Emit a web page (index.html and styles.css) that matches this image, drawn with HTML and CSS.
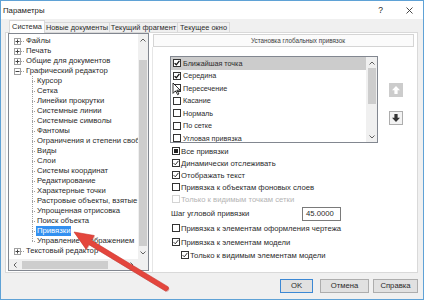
FILE: index.html
```html
<!DOCTYPE html>
<html lang="ru">
<head>
<meta charset="utf-8">
<title>Параметры</title>
<link rel="stylesheet" href="styles.css">
</head>
<body>
<div class="window">
  <div class="titlebar">
    <span class="title">Параметры</span>
    <span class="help">?</span>
    <svg class="close" viewBox="0 0 7 7" width="7" height="7"><path d="M0.5 0.5L6.5 6.5M6.5 0.5L0.5 6.5" stroke="#333" stroke-width="0.9"/></svg>
  </div>
  <div class="body">
    <div class="tabs">
      <div class="tab active t1">Система</div>
      <div class="tab t2">Новые документы</div>
      <div class="tab t3">Текущий фрагмент</div>
      <div class="tab t4">Текущее окно</div>
    </div>
    <div class="tabpage">
      <div class="tree">
        <div class="tree-content">
          <div class="row root"><svg class="exp" viewBox="0 0 7 7"><rect x="0.5" y="0.5" width="6" height="6" fill="#fff" stroke="#a0a0a0"/><path d="M1.5 3.5h4M3.5 1.5v4" stroke="#444"/></svg><span class="hline"></span><span class="label">Файлы</span></div>
          <div class="row root"><svg class="exp" viewBox="0 0 7 7"><rect x="0.5" y="0.5" width="6" height="6" fill="#fff" stroke="#a0a0a0"/><path d="M1.5 3.5h4M3.5 1.5v4" stroke="#444"/></svg><span class="hline"></span><span class="label">Печать</span></div>
          <div class="row root"><svg class="exp" viewBox="0 0 7 7"><rect x="0.5" y="0.5" width="6" height="6" fill="#fff" stroke="#a0a0a0"/><path d="M1.5 3.5h4M3.5 1.5v4" stroke="#444"/></svg><span class="hline"></span><span class="label">Общие для документов</span></div>
          <div class="row root"><svg class="exp" viewBox="0 0 7 7"><rect x="0.5" y="0.5" width="6" height="6" fill="#fff" stroke="#a0a0a0"/><path d="M1.5 3.5h4" stroke="#444"/></svg><span class="hline"></span><span class="label">Графический редактор</span></div>
          <div class="row child"><span class="branch"></span><span class="label">Курсор</span></div>
          <div class="row child"><span class="branch"></span><span class="label">Сетка</span></div>
          <div class="row child"><span class="branch"></span><span class="label">Линейки прокрутки</span></div>
          <div class="row child"><span class="branch"></span><span class="label">Системные линии</span></div>
          <div class="row child"><span class="branch"></span><span class="label">Системные символы</span></div>
          <div class="row child"><span class="branch"></span><span class="label">Фантомы</span></div>
          <div class="row child"><span class="branch"></span><span class="label">Ограничения и степени свободы</span></div>
          <div class="row child"><span class="branch"></span><span class="label">Виды</span></div>
          <div class="row child"><span class="branch"></span><span class="label">Слои</span></div>
          <div class="row child"><span class="branch"></span><span class="label">Системы координат</span></div>
          <div class="row child"><span class="branch"></span><span class="label">Редактирование</span></div>
          <div class="row child"><span class="branch"></span><span class="label">Характерные точки</span></div>
          <div class="row child"><span class="branch"></span><span class="label">Растровые объекты, взятые в ,</span></div>
          <div class="row child"><span class="branch"></span><span class="label">Упрощенная отрисовка</span></div>
          <div class="row child"><span class="branch"></span><span class="label">Поиск объекта</span></div>
          <div class="row child"><span class="branch"></span><span class="label sel">Привязки</span></div>
          <div class="row child"><span class="branch last"></span><span class="label">Управление изображением</span></div>
          <div class="row root"><svg class="exp" viewBox="0 0 7 7"><rect x="0.5" y="0.5" width="6" height="6" fill="#fff" stroke="#a0a0a0"/><path d="M1.5 3.5h4M3.5 1.5v4" stroke="#444"/></svg><span class="hline"></span><span class="label">Текстовый редактор</span></div>
        </div>
        <div class="vscroll">
          <div class="sb-arrow"><svg viewBox="0 0 6 4" width="6" height="4"><path d="M0.5 3.5L3 1L5.5 3.5" fill="none" stroke="#606060"/></svg></div>
          <div class="vtrack"><div class="vthumb tree-thumb"></div></div>
          <div class="sb-arrow"><svg viewBox="0 0 6 4" width="6" height="4"><path d="M0.5 0.5L3 3L5.5 0.5" fill="none" stroke="#606060"/></svg></div>
        </div>
        <div class="hscroll">
          <div class="sb-arrow h"><svg viewBox="0 0 4 6" width="4" height="6"><path d="M3.5 0.5L1 3L3.5 5.5" fill="none" stroke="#606060"/></svg></div>
          <div class="htrack"><div class="hthumb"></div></div>
          <div class="sb-arrow h"><svg viewBox="0 0 4 6" width="4" height="6"><path d="M0.5 0.5L3 3L0.5 5.5" fill="none" stroke="#606060"/></svg></div>
        </div>
        <div class="corner"></div>
      </div>
      <div class="panel">
        <div class="panel-header">Установка глобальных привязок</div>
        <div class="settings">
          <div class="listrow">
            <div class="listbox">
              <div class="list-items">
                <div class="item sel"><svg class="cb" viewBox="0 0 8 8"><rect x="0.5" y="0.5" width="7" height="7" fill="#fff" stroke="#333"/><path d="M1.6 4.1L3.3 5.8L6.4 1.9" fill="none" stroke="#111" stroke-width="1.3"/></svg><span>Ближайшая точка</span></div>
                <div class="item"><svg class="cb" viewBox="0 0 8 8"><rect x="0.5" y="0.5" width="7" height="7" fill="#fff" stroke="#333"/><path d="M1.6 4.1L3.3 5.8L6.4 1.9" fill="none" stroke="#111" stroke-width="1.3"/></svg><span>Середина</span></div>
                <div class="item"><svg class="cb" viewBox="0 0 8 8"><rect x="0.5" y="0.5" width="7" height="7" fill="#fff" stroke="#333"/></svg><span>Пересечение</span></div>
                <div class="item"><svg class="cb" viewBox="0 0 8 8"><rect x="0.5" y="0.5" width="7" height="7" fill="#fff" stroke="#333"/></svg><span>Касание</span></div>
                <div class="item"><svg class="cb" viewBox="0 0 8 8"><rect x="0.5" y="0.5" width="7" height="7" fill="#fff" stroke="#333"/></svg><span>Нормаль</span></div>
                <div class="item"><svg class="cb" viewBox="0 0 8 8"><rect x="0.5" y="0.5" width="7" height="7" fill="#fff" stroke="#333"/></svg><span>По сетке</span></div>
                <div class="item"><svg class="cb" viewBox="0 0 8 8"><rect x="0.5" y="0.5" width="7" height="7" fill="#fff" stroke="#333"/></svg><span>Угловая привязка</span></div>
              </div>
              <div class="vscroll list-sb">
                <div class="sb-arrow"><svg viewBox="0 0 6 4" width="6" height="4"><path d="M0.5 3.5L3 1L5.5 3.5" fill="none" stroke="#606060"/></svg></div>
                <div class="vtrack"><div class="vthumb list-thumb"></div></div>
                <div class="sb-arrow"><svg viewBox="0 0 6 4" width="6" height="4"><path d="M0.5 0.5L3 3L5.5 0.5" fill="none" stroke="#606060"/></svg></div>
              </div>
            </div>
            <div class="order">
              <div class="obtn disabled"><svg viewBox="0 0 12 12" width="12" height="12"><path d="M6 2L10 6.2H7.6V10H4.4V6.2H2Z" fill="#fff"/></svg></div>
              <div class="obtn"><svg viewBox="0 0 12 12" width="12" height="12"><path d="M6 10L10 5.8H7.6V2H4.4V5.8H2Z" fill="#333"/></svg></div>
            </div>
          </div>
          <div class="options">
            <div class="opt"><svg class="cb" viewBox="0 0 8 8"><rect x="0.5" y="0.5" width="7" height="7" fill="#fff" stroke="#333"/><rect x="2" y="2" width="4" height="4" fill="#222"/></svg><span>Все привязки</span></div>
            <div class="opt"><svg class="cb" viewBox="0 0 8 8"><rect x="0.5" y="0.5" width="7" height="7" fill="#fff" stroke="#333"/><path d="M1.6 4.1L3.3 5.8L6.4 1.9" fill="none" stroke="#333" stroke-width="1"/></svg><span>Динамически отслеживать</span></div>
            <div class="opt"><svg class="cb" viewBox="0 0 8 8"><rect x="0.5" y="0.5" width="7" height="7" fill="#fff" stroke="#333"/><path d="M1.6 4.1L3.3 5.8L6.4 1.9" fill="none" stroke="#333" stroke-width="1"/></svg><span>Отображать текст</span></div>
            <div class="opt"><svg class="cb" viewBox="0 0 8 8"><rect x="0.5" y="0.5" width="7" height="7" fill="#fff" stroke="#333"/></svg><span>Привязка к объектам фоновых слоев</span></div>
            <div class="opt disabled"><svg class="cb" viewBox="0 0 8 8"><rect x="0.5" y="0.5" width="7" height="7" fill="#fff" stroke="#d4d4d4"/></svg><span>Только к видимым точкам сетки</span></div>
            <div class="opt step"><span class="step-label">Шаг угловой привязки</span><span class="field">45.0000</span></div>
            <div class="opt gap1"><svg class="cb" viewBox="0 0 8 8"><rect x="0.5" y="0.5" width="7" height="7" fill="#fff" stroke="#333"/></svg><span>Привязка к элементам оформления чертежа</span></div>
            <div class="opt gap2"><svg class="cb" viewBox="0 0 8 8"><rect x="0.5" y="0.5" width="7" height="7" fill="#fff" stroke="#333"/><path d="M1.6 4.1L3.3 5.8L6.4 1.9" fill="none" stroke="#333" stroke-width="1"/></svg><span>Привязка к элементам модели</span></div>
            <div class="opt gap1 indent"><svg class="cb" viewBox="0 0 8 8"><rect x="0.5" y="0.5" width="7" height="7" fill="#fff" stroke="#333"/><path d="M1.6 4.1L3.3 5.8L6.4 1.9" fill="none" stroke="#333" stroke-width="1"/></svg><span>Только к видимым элементам модели</span></div>
          </div>
        </div>
      </div>
    </div>
    <div class="buttons">
      <div class="btn default">OK</div>
      <div class="btn">Отмена</div>
      <div class="btn">Справка</div>
    </div>
  </div>
  <svg class="overlay" viewBox="0 0 424 300" width="424" height="300">
    <path d="M173 83V93.4L175.6 90.8L177.6 94.7L178.9 94L176.9 90.2H180.2Z" fill="#fff" stroke="#000" stroke-width="0.8" stroke-linejoin="round"/>
    <path d="M74 232L94.3 235.5L91.4 240.3L168.3 286.9Q169.5 289.5 165.7 291.1L88.8 244.5L86 249.2Z" fill="#b52a24" transform="translate(0.8 1)" opacity="0.35"/>
    <path d="M74 232L94.3 235.5L91.4 240.3L168.3 286.9Q169.5 289.5 165.7 291.1L88.8 244.5L86 249.2Z" fill="#e4463d" stroke="#c9332b" stroke-width="0.6" stroke-linejoin="round"/>
  </svg>
</div>
</body>
</html>
```
FILE: styles.css
```css
* {
  box-sizing: border-box;
  margin: 0;
  padding: 0;
}

html, body {
  width: 424px;
  height: 300px;
  overflow: hidden;
}

body {
  font-family: "Liberation Sans", Arial, sans-serif;
  font-size: 7.7px;
  color: #2b2b2b;
  background: #f0f0f0;
}

.window {
  position: relative;
  width: 424px;
  height: 300px;
  border: 1px solid #5fa2d6;
  background: #f0f0f0;
  display: flex;
  flex-direction: column;
}

.titlebar {
  height: 18px;
  flex: none;
  background: #ffffff;
  display: flex;
  align-items: center;
  padding-left: 2px;
  font-size: 7.8px;
  color: #222;
}

.title {
  flex: 1;
}

.help {
  margin-right: 23px;
  font-size: 8.5px;
}

.close {
  margin-right: 10px;
}

.body {
  flex: 1;
  display: flex;
  flex-direction: column;
  padding: 1px 5px 0 4px;
}

/* tabs */
.tabs {
  display: flex;
  align-items: flex-start;
  height: 13px;
  margin-left: 4px;
  margin-bottom: -1px;
  font-size: 7.4px;
}

.tab {
  height: 10px;
  margin-top: 2px;
  border: 1px solid #d9d9d9;
  border-left: none;
  border-bottom: none;
  line-height: 9px;
  white-space: nowrap;
  text-align: center;
  background: #f0f0f0;
}

.tab.active {
  position: relative;
  z-index: 1;
  height: 13px;
  margin-top: 0;
  border-left: 1px solid #d9d9d9;
  background: #ffffff;
  line-height: 11px;
}

.t1 { width: 36px; }
.t2 { width: 65px; }
.t3 { width: 68px; }
.t4 { width: 52px; }

.tabpage {
  height: 241px;
  flex: none;
  border: 1px solid #d9d9d9;
  background: #ffffff;
  display: flex;
  padding-left: 2px;
}

/* tree */
.tree {
  width: 141px;
  height: 238px;
  border: 1px solid #828790;
  background: #ffffff;
  display: grid;
  grid-template-columns: 1fr 10px;
  grid-template-rows: 1fr 11px;
}

.tree-content {
  overflow: hidden;
  padding-top: 2px;
  white-space: nowrap;
}

.row {
  height: 10px;
  display: flex;
  align-items: center;
  line-height: 10px;
}

.row.root {
  padding-left: 5px;
}

.row.child {
  padding-left: 23px;
}

.exp {
  width: 7px;
  height: 7px;
  flex: none;
}

.hline {
  width: 4px;
  height: 1px;
  flex: none;
  margin-right: 1px;
  background: repeating-linear-gradient(to right, #a0a0a0 0 1px, transparent 1px 2px);
}

.branch {
  width: 4px;
  height: 10px;
  flex: none;
  margin-right: 1px;
  background:
    repeating-linear-gradient(to right, #a0a0a0 0 1px, transparent 1px 2px) 0 5px / 100% 1px no-repeat,
    repeating-linear-gradient(to bottom, #a0a0a0 0 1px, transparent 1px 2px) 0 0 / 1px 100% no-repeat;
}

.branch.last {
  background:
    repeating-linear-gradient(to right, #a0a0a0 0 1px, transparent 1px 2px) 0 5px / 100% 1px no-repeat,
    repeating-linear-gradient(to bottom, #a0a0a0 0 1px, transparent 1px 2px) 0 0 / 1px 6px no-repeat;
}

.label.sel {
  background: #3390f0;
  color: #ffffff;
  padding: 0 1px;
  margin-left: -1px;
}

/* scrollbars */
.vscroll {
  background: #f0f0f0;
  display: flex;
  flex-direction: column;
}

.sb-arrow {
  height: 12px;
  flex: none;
  display: flex;
  align-items: center;
  justify-content: center;
}

.sb-arrow.h {
  height: auto;
  width: 12px;
}

.vtrack {
  flex: 1;
  display: flex;
  flex-direction: column;
  align-items: center;
}

.vthumb {
  width: 8px;
  background: #cdcdcd;
}

.tree-thumb {
  margin-top: 14px;
  height: 186px;
}

.hscroll {
  background: #f0f0f0;
  display: flex;
}

.htrack {
  flex: 1;
  display: flex;
  align-items: center;
}

.hthumb {
  margin-left: 1px;
  width: 86px;
  height: 8px;
  background: #cdcdcd;
}

.corner {
  background: #f0f0f0;
}

/* right panel */
.panel {
  width: 264px;
  margin-left: 3px;
  display: flex;
  flex-direction: column;
}

.panel-header {
  height: 13px;
  flex: none;
  margin: 1px 2px 0 1px;
  border: 1px solid #d5d5d5;
  background: #fbfbfb;
  line-height: 11px;
  padding-left: 97px;
  font-size: 6.3px;
  color: #3a3a3a;
  white-space: nowrap;
}

.settings {
  flex: 1;
  border-left: 1px solid #e6e6e6;
}

.listrow {
  display: flex;
  margin: 9px 0 0 17px;
}

.listbox {
  width: 208px;
  height: 87px;
  border: 1px solid #828790;
  background: #ffffff;
  display: flex;
}

.list-items {
  flex: 1;
  overflow: hidden;
  font-size: 7.2px;
}

.item {
  height: 12.5px;
  display: flex;
  align-items: center;
  gap: 2px;
  padding-left: 2px;
  white-space: nowrap;
}

.item.sel {
  background: #cccccc;
}

.cb {
  width: 8px;
  height: 8px;
  flex: none;
}

.list-sb {
  width: 11px;
}

.list-sb .sb-arrow {
  height: 11px;
}

.list-thumb {
  margin-top: 0;
  height: 36px;
}

.order {
  display: flex;
  flex-direction: column;
  gap: 14px;
  padding-top: 27px;
  margin-left: 11px;
}

.obtn {
  width: 14px;
  height: 14px;
  border: 1px solid #adadad;
  background: #f3f3f3;
  display: flex;
  align-items: center;
  justify-content: center;
}

.obtn.disabled {
  border-color: #cccccc;
  background: #cccccc;
}

.options {
  margin-top: 2px;
  padding-left: 19px;
}

.opt {
  height: 12px;
  display: flex;
  align-items: center;
  gap: 1px;
  white-space: nowrap;
}

.opt.disabled {
  color: #b4b4b4;
}

.opt.step {
  height: 15px;
  margin-top: 1px;
}

.step-label {
  width: 130px;
  margin-left: -1px;
}

.field {
  width: 39px;
  height: 14px;
  border: 1px solid #7a7a7a;
  background: #ffffff;
  line-height: 12px;
  padding-left: 3px;
}

.opt.gap1 {
  margin-top: 1px;
}

.opt.gap2 {
  margin-top: 2px;
}

.opt.indent {
  padding-left: 9px;
}

/* dialog buttons */
.buttons {
  display: flex;
  justify-content: flex-end;
  gap: 4px;
  margin-top: 6px;
}

.btn {
  height: 14px;
  border: 1px solid #adadad;
  background: #e1e1e1;
  line-height: 12px;
  text-align: center;
  width: 45px;
}

.btn.default {
  width: 33px;
  margin-right: 3px;
  border-color: #3c88d4;
}

.btn:nth-child(2) {
  width: 49px;
}

.overlay {
  position: absolute;
  left: -1px;
  top: -1px;
  pointer-events: none;
}
```
